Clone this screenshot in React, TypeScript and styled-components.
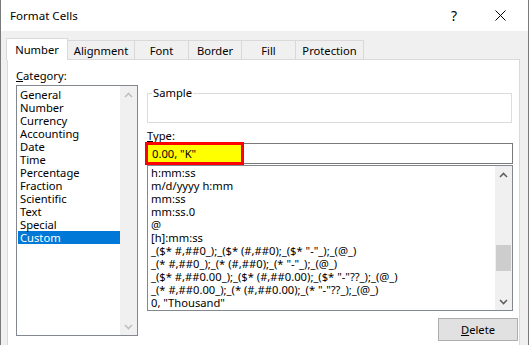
import React from "react";
import styled, { createGlobalStyle } from "styled-components";

const GlobalStyle = createGlobalStyle`
  html, body {
    margin: 0;
    padding: 0;
    background: #f0f0f0;
  }
  body {
    font-family: "Segoe UI", "Noto Sans", sans-serif;
    font-size: 11.2px;
    color: #000;
  }
`;

const Window = styled.div`
  width: 529px;
  height: 345px;
  box-sizing: border-box;
  border-left: 1px solid #7a7a7a;
  border-right: 1px solid #7a7a7a;
  display: flex;
  flex-direction: column;
  overflow: hidden;
  background: #f0f0f0;
`;

const TitleBar = styled.div`
  height: 31px;
  flex: none;
  background: #ffffff;
  display: flex;
  align-items: center;
  padding-left: 9px;
  padding-right: 5px;
`;

const Title = styled.div`
  flex: 1;
  line-height: 16px;
  font-size: 11.6px;
`;

const TitleButton = styled.div`
  width: 46px;
  height: 31px;
  display: flex;
  align-items: center;
  justify-content: center;
  font-size: 14px;
`;

const Body = styled.div`
  flex: 1;
  display: flex;
  flex-direction: column;
  padding: 7px 8px 0 6px;
`;

const TabRow = styled.div`
  display: flex;
  align-items: flex-end;
  height: 21px;
  position: relative;
  z-index: 1;
`;

const Tab = styled.div<{ $active?: boolean; $w: number }>`
  box-sizing: border-box;
  width: ${(p) => p.$w}px;
  height: ${(p) => (p.$active ? 22 : 19)}px;
  margin-bottom: ${(p) => (p.$active ? -1 : 0)}px;
  margin-left: -1px;
  border: 1px solid #d9d9d9;
  border-bottom: none;
  background: ${(p) => (p.$active ? "#ffffff" : "#f0f0f0")};
  display: flex;
  align-items: center;
  justify-content: center;
  padding-top: ${(p) => (p.$active ? 0 : 1)}px;
  line-height: 16px;
`;

const Panel = styled.div`
  flex: 1;
  width: 513px;
  box-sizing: border-box;
  background: #ffffff;
  border: 1px solid #d9d9d9;
  border-bottom: none;
  display: grid;
  grid-template-columns: 122px 1fr;
  column-gap: 9px;
  align-items: start;
  padding: 8px 1px 0 8px;
`;

const Column = styled.div<{ $top?: number }>`
  display: flex;
  flex-direction: column;
  padding-top: ${(p) => p.$top ?? 0}px;
`;

const Label = styled.div`
  line-height: 16px;
  margin-bottom: 1px;
`;

const TypeLabel = styled.div`
  line-height: 15px;
  margin-top: 5px;
`;

const ListBox = styled.div<{ $h: number; $w?: number; $mt?: number }>`
  box-sizing: border-box;
  height: ${(p) => p.$h}px;
  width: ${(p) => (p.$w ? `${p.$w}px` : "auto")};
  margin-top: ${(p) => p.$mt ?? 0}px;
  border: 1px solid #828790;
  background: #ffffff;
  display: flex;
`;

const Items = styled.div<{ $pl: number; $pt: number }>`
  flex: 1;
  padding: ${(p) => p.$pt}px 0 0 ${(p) => p.$pl}px;
  overflow: hidden;
`;

const Item = styled.div<{ $selected?: boolean }>`
  height: 13px;
  line-height: 13px;
  padding-left: 2px;
  white-space: nowrap;
  background: ${(p) => (p.$selected ? "#0078d7" : "transparent")};
  color: ${(p) => (p.$selected ? "#ffffff" : "#000000")};
`;

const ScrollBar = styled.div`
  width: 17px;
  flex: none;
  background: #f0f0f0;
  display: flex;
  flex-direction: column;
`;

const ScrollArrow = styled.div`
  width: 17px;
  height: 17px;
  display: flex;
  align-items: center;
  justify-content: center;
`;

const ScrollTrack = styled.div`
  flex: 1;
`;

const Thumb = styled.div`
  width: 15px;
  margin-left: 1px;
  height: 26px;
  background: #cdcdcd;
`;

const GroupBox = styled.fieldset`
  box-sizing: border-box;
  width: 365px;
  height: 38px;
  margin: 0;
  padding: 0;
  border: 1px solid #dcdcdc;
  min-width: 0;
`;

const Legend = styled.legend`
  margin-left: 4px;
  padding: 0 1px;
  line-height: 16px;
`;

const TypeField = styled.div`
  box-sizing: border-box;
  width: 366px;
  height: 21px;
  border: 1px solid #7a7a7a;
  display: flex;
  align-items: flex-start;
`;

const Highlight = styled.div`
  box-sizing: border-box;
  width: 99px;
  height: 23px;
  margin: -2px 0 0 -3px;
  border: 3px solid #ff0000;
  background: #ffff00;
  padding-left: 4px;
  line-height: 17px;
  white-space: nowrap;
`;

const ButtonRow = styled.div`
  display: flex;
  justify-content: flex-end;
  margin-top: 7px;
`;

const Button = styled.div`
  box-sizing: border-box;
  width: 80px;
  height: 23px;
  background: #e1e1e1;
  border: 1px solid #adadad;
  display: flex;
  align-items: center;
  justify-content: center;
  line-height: 16px;
`;

const Chevron = ({ up, color }: { up?: boolean; color: string }) => (
  <svg width="9" height="6" viewBox="0 0 9 6">
    <polyline
      points={up ? "1,5 4.5,1.5 8,5" : "1,1 4.5,4.5 8,1"}
      fill="none"
      stroke={color}
      strokeWidth="1.6"
    />
  </svg>
);

const categories = [
  "General",
  "Number",
  "Currency",
  "Accounting",
  "Date",
  "Time",
  "Percentage",
  "Fraction",
  "Scientific",
  "Text",
  "Special",
  "Custom",
];

const formats = [
  "h:mm:ss",
  "m/d/yyyy h:mm",
  "mm:ss",
  "mm:ss.0",
  "@",
  "[h]:mm:ss",
  '_($* #,##0_);_($* (#,##0);_($* "-"_);_(@_)',
  '_(* #,##0_);_(* (#,##0);_(* "-"_);_(@_)',
  '_($* #,##0.00_);_($* (#,##0.00);_($* "-"??_);_(@_)',
  '_(* #,##0.00_);_(* (#,##0.00);_(* "-"??_);_(@_)',
  '0, "Thousand"',
];

const tabs: [string, number][] = [
  ["Number", 62],
  ["Alignment", 68],
  ["Font", 55],
  ["Border", 54],
  ["Fill", 55],
  ["Protection", 69],
];

export default function App() {
  return (
    <>
      <GlobalStyle />
      <Window>
        <TitleBar>
          <Title>Format Cells</Title>
          <TitleButton>?</TitleButton>
          <TitleButton>
            <svg width="11" height="11" viewBox="0 0 11 11">
              <path d="M0.5 0.5 L10.5 10.5 M10.5 0.5 L0.5 10.5" stroke="#000" strokeWidth="1" />
            </svg>
          </TitleButton>
        </TitleBar>
        <Body>
          <TabRow>
            {tabs.map(([name, w], i) => (
              <Tab key={name} $w={w} $active={i === 0}>
                {name}
              </Tab>
            ))}
          </TabRow>
          <Panel>
            <Column>
              <Label>
                <u>C</u>ategory:
              </Label>
              <ListBox $h={251}>
                <Items $pl={1} $pt={2}>
                  {categories.map((c) => (
                    <Item key={c} $selected={c === "Custom"}>
                      {c}
                    </Item>
                  ))}
                </Items>
                <ScrollBar>
                  <ScrollArrow>
                    <Chevron up color="#c0c0c0" />
                  </ScrollArrow>
                  <ScrollTrack />
                  <ScrollArrow>
                    <Chevron color="#c0c0c0" />
                  </ScrollArrow>
                </ScrollBar>
              </ListBox>
            </Column>
            <Column $top={17}>
              <GroupBox>
                <Legend>Sample</Legend>
              </GroupBox>
              <TypeLabel>
                <u>T</u>ype:
              </TypeLabel>
              <TypeField>
                <Highlight>0.00, "K"</Highlight>
              </TypeField>
              <ListBox $h={146} $w={366} $mt={1}>
                <Items $pl={1} $pt={0}>
                  {formats.map((f) => (
                    <Item key={f}>{f}</Item>
                  ))}
                </Items>
                <ScrollBar>
                  <ScrollArrow>
                    <Chevron up color="#606060" />
                  </ScrollArrow>
                  <ScrollTrack>
                    <Thumb style={{ marginTop: 62 }} />
                  </ScrollTrack>
                  <ScrollArrow>
                    <Chevron color="#606060" />
                  </ScrollArrow>
                </ScrollBar>
              </ListBox>
              <ButtonRow>
                <Button>
                  <u>D</u>elete
                </Button>
              </ButtonRow>
            </Column>
          </Panel>
        </Body>
      </Window>
    </>
  );
}
